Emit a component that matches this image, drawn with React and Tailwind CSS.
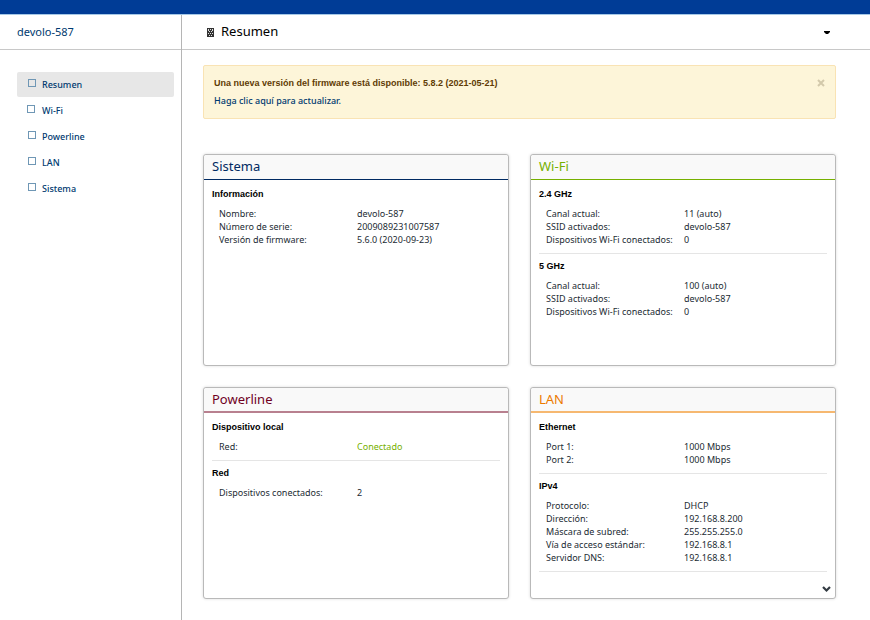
import React, { useState } from "react";

const navItems = [
  { label: "Resumen", icon: "ml-[11px]" },
  { label: "Wi-Fi", icon: "ml-[10px]" },
  { label: "Powerline", icon: "ml-[11px]" },
  { label: "LAN", icon: "ml-[11px]" },
  { label: "Sistema", icon: "ml-[11px]" },
];

const panels = [
  {
    title: "Sistema",
    color: "text-[#002a62] border-[#002a62] border-b",
    sections: [
      {
        title: "Información",
        rows: [
          ["Nombre:", "devolo-587"],
          ["Número de serie:", "2009089231007587"],
          ["Versión de firmware:", "5.6.0 (2020-09-23)"],
        ],
      },
    ],
  },
  {
    title: "Wi-Fi",
    color: "text-[#76b000] border-[#76b000] border-b",
    sections: [
      {
        title: "2.4 GHz",
        rows: [
          ["Canal actual:", "11 (auto)"],
          ["SSID activados:", "devolo-587"],
          ["Dispositivos Wi-Fi conectados:", "0"],
        ],
      },
      {
        title: "5 GHz",
        rows: [
          ["Canal actual:", "100 (auto)"],
          ["SSID activados:", "devolo-587"],
          ["Dispositivos Wi-Fi conectados:", "0"],
        ],
      },
    ],
  },
  {
    title: "Powerline",
    color: "text-[#70001f] border-[#b8808f] border-b-2",
    sections: [
      {
        title: "Dispositivo local",
        rows: [["Red:", "Conectado"]],
      },
      {
        title: "Red",
        rows: [["Dispositivos conectados:", "2"]],
      },
    ],
  },
  {
    title: "LAN",
    color: "text-[#ec7a00] border-[#f6b870] border-b-2",
    more: true,
    sections: [
      {
        title: "Ethernet",
        rows: [
          ["Port 1:", "1000 Mbps"],
          ["Port 2:", "1000 Mbps"],
        ],
      },
      {
        title: "IPv4",
        rows: [
          ["Protocolo:", "DHCP"],
          ["Dirección:", "192.168.8.200"],
          ["Máscara de subred:", "255.255.255.0"],
          ["Vía de acceso estándar:", "192.168.8.1"],
          ["Servidor DNS:", "192.168.8.1"],
        ],
      },
    ],
  },
];

const Section = ({ title, rows, divider }) => (
  <section className={divider ? "border-b border-[#e5e5e5] pb-[7px] mb-1" : ""}>
    <h3 className="font-['Liberation_Sans',sans-serif] text-[9px] leading-4 font-bold text-black">
      {title}
    </h3>
    <table className="w-full mt-[5px] table-fixed">
      <tbody>
        {rows.map(([name, value]) => (
          <tr key={name} className="leading-[13px]">
            <th
              scope="row"
              className="w-[145px] p-0 pl-[7px] text-left font-normal whitespace-nowrap"
            >
              {name}
            </th>
            <td className={value === "Conectado" ? "p-0 text-[#76b000]" : "p-0"}>
              {value}
            </td>
          </tr>
        ))}
      </tbody>
    </table>
  </section>
);

const Panel = ({ title, color, sections, more }) => (
  <article className="flex flex-col min-h-[212px] rounded-[3px] border border-[#b9b9b9] bg-white shadow-[0_0_3px_rgba(0,0,0,0.15)]">
    <h2 className={`h-[25px] px-2 rounded-t-[3px] bg-[#f9f9f9] text-[13px] leading-[22px] ${color}`}>
      {title}
    </h2>
    <div className="flex-1 px-2 pt-[6px]">
      {sections.map((section, i) => (
        <Section
          key={section.title}
          {...section}
          divider={more || i < sections.length - 1}
        />
      ))}
    </div>
    {more && (
      <button type="button" aria-label="Más" className="self-end p-1 pb-[5px] cursor-pointer">
        <svg width="9" height="8" viewBox="0 0 9 8" fill="none" stroke="#333b42" strokeWidth="2.200">
          <path d="M1 2l3.500 3.500L8 2" />
        </svg>
      </button>
    )}
  </article>
);

const App = () => {
  const [active, setActive] = useState("Resumen");
  const [showAlert, setShowAlert] = useState(true);

  return (
    <div className="min-h-screen flex flex-col bg-white font-['Noto_Sans',sans-serif] text-[9px] text-[#222b33]">
      <div className="h-[15px] bg-[#003c96] border-b border-[#a5c8e6]" />

      <div className="flex flex-1">
        {/* Sidebar */}
        <aside className="w-[182px] shrink-0 border-r border-[#b5b5b5]">
          <div className="h-[35px] border-b border-[#c8c8c8] pl-[17px] flex items-center">
            <a href="#" className="text-[11px] leading-4 text-[#003a70]">
              devolo-587
            </a>
          </div>
          <nav className="mt-[22px] pl-[17px] pr-[7px] flex flex-col gap-px">
            {navItems.map(({ label, icon }) => (
              <a
                key={label}
                href="#"
                onClick={() => setActive(label)}
                className={`h-[25px] flex items-center text-[9px] font-medium text-[#003a70] rounded-[2px] ${
                  active === label ? "bg-[#e7e7e7]" : ""
                }`}
              >
                <span className="w-[25px] shrink-0 -mt-[3px]">
                  <span className={`block size-2 border border-[#6f97b5] ${icon}`} />
                </span>
                {label}
              </a>
            ))}
          </nav>
        </aside>

        <div className="flex-1 min-w-0">
          {/* Header */}
          <header className="h-[35px] border-b border-[#c8c8c8] pl-6 pr-10 flex items-center">
            <svg className="mr-[6px]" width="9" height="9" viewBox="0 0 9 9">
              <path d="M1 0h7v9H1z" fill="#333" />
              <path
                d="M2 1h1v2H2zM4 1h1v1H4zM6 1h1v2H6zM3 3h1v1H3zM5 3h1v1H5zM2 5h1v1H2zM4 5h1v1H4zM6 5h1v1H6zM3 7h1v1H3zM5 7h1v1H5z"
                fill="#ddd"
              />
            </svg>
            <h1 className="pb-[2px] text-[13px] leading-5 text-black">Resumen</h1>
            <button type="button" aria-label="Menú" className="ml-auto cursor-pointer">
              <svg width="6" height="3" viewBox="0 0 6 3">
                <path d="M0 0h6v1L4 3H2L0 1z" fill="#000" />
              </svg>
            </button>
          </header>

          <main className="pl-[21px] pr-[34px] pt-[15px] pb-[21px]">
            {/* Firmware alert */}
            {showAlert && (
              <div
                role="alert"
                className="flex items-start justify-between rounded-[2px] border border-[#f9e3b4] bg-[#fdf5d9] px-[10px] py-[9px] mb-[35px]"
              >
                <div>
                  <p className="font-['Liberation_Sans',sans-serif] text-[9px] leading-[17px] font-bold text-[#5f3b05]">
                    Una nueva versión del firmware está disponible: 5.8.2 (2021-05-21)
                  </p>
                  <a href="#" className="block text-[9px] leading-[17px] font-medium text-[#003a70]">
                    Haga clic aquí para actualizar.
                  </a>
                </div>
                <button
                  type="button"
                  aria-label="Cerrar"
                  onClick={() => setShowAlert(false)}
                  className="mt-1 cursor-pointer"
                >
                  <svg width="8" height="8" viewBox="0 0 8 8" stroke="#d3c9ab" strokeWidth="2">
                    <path d="M1 1l6 6M7 1L1 7" />
                  </svg>
                </button>
              </div>
            )}

            <div className="grid grid-cols-2 gap-[21px]">
              {panels.map((panel) => (
                <Panel key={panel.title} {...panel} />
              ))}
            </div>
          </main>
        </div>
      </div>
    </div>
  );
};

export default App;
